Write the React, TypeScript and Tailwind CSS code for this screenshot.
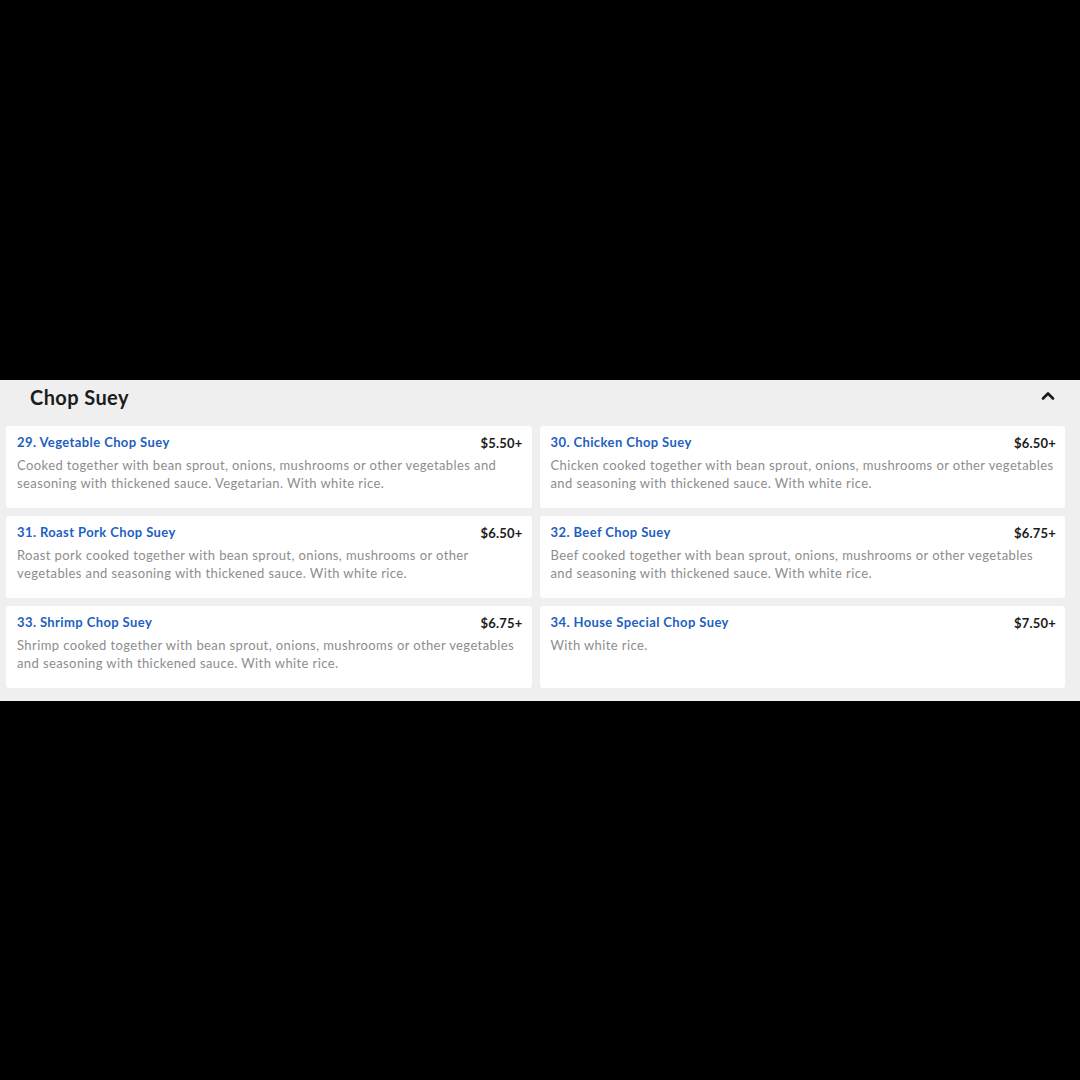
import { ChevronUp } from "lucide-react";

type Item = {
  name: string;
  price: string;
  desc: string;
};

const ITEMS: Item[] = [
  {
    name: "29. Vegetable Chop Suey",
    price: "$5.50+",
    desc: "Cooked together with bean sprout, onions, mushrooms or other vegetables and seasoning with thickened sauce. Vegetarian. With white rice.",
  },
  {
    name: "30. Chicken Chop Suey",
    price: "$6.50+",
    desc: "Chicken cooked together with bean sprout, onions, mushrooms or other vegetables and seasoning with thickened sauce. With white rice.",
  },
  {
    name: "31. Roast Pork Chop Suey",
    price: "$6.50+",
    desc: "Roast pork cooked together with bean sprout, onions, mushrooms or other vegetables and seasoning with thickened sauce. With white rice.",
  },
  {
    name: "32. Beef Chop Suey",
    price: "$6.75+",
    desc: "Beef cooked together with bean sprout, onions, mushrooms or other vegetables and seasoning with thickened sauce. With white rice.",
  },
  {
    name: "33. Shrimp Chop Suey",
    price: "$6.75+",
    desc: "Shrimp cooked together with bean sprout, onions, mushrooms or other vegetables and seasoning with thickened sauce. With white rice.",
  },
  {
    name: "34. House Special Chop Suey",
    price: "$7.50+",
    desc: "With white rice.",
  },
];

function MenuCard({ item }: { item: Item }) {
  return (
    <div className="h-[82px] rounded-[3px] bg-white pl-[11px] pr-[9px] pt-[7px]">
      <div className="flex items-start justify-between">
        <span className="text-[13px] font-bold leading-[18px] tracking-[0.4px] text-[#1e5fbf]">
          {item.name}
        </span>
        <span className="mt-[1px] text-[13px] font-bold leading-[18px] tracking-[0.2px] text-[#1c1c1c]">
          {item.price}
        </span>
      </div>
      <p className="mt-[4px] text-[13px] leading-[18px] tracking-[0.4px] text-[#8d8d8d]">
        {item.desc}
      </p>
    </div>
  );
}

export default function App() {
  return (
    <div className="flex h-[1080px] w-[1080px] items-center bg-black font-['Lato',sans-serif]">
      <div className="w-full bg-[#efefef] pb-[13px]">
        <div className="mb-[11px] flex h-[35px] items-center justify-between pl-[30px] pr-[22px]">
          <h2 className="text-[20px] font-bold tracking-[0.4px] text-[#1c1c1c]">Chop Suey</h2>
          <ChevronUp size={20} strokeWidth={3.2} className="-mt-[3px] text-[#1c1c1c]" />
        </div>
        <div className="grid grid-cols-2 gap-[8px] pl-[6px] pr-[15px]">
          {ITEMS.map((item) => (
            <MenuCard key={item.name} item={item} />
          ))}
        </div>
      </div>
    </div>
  );
}
